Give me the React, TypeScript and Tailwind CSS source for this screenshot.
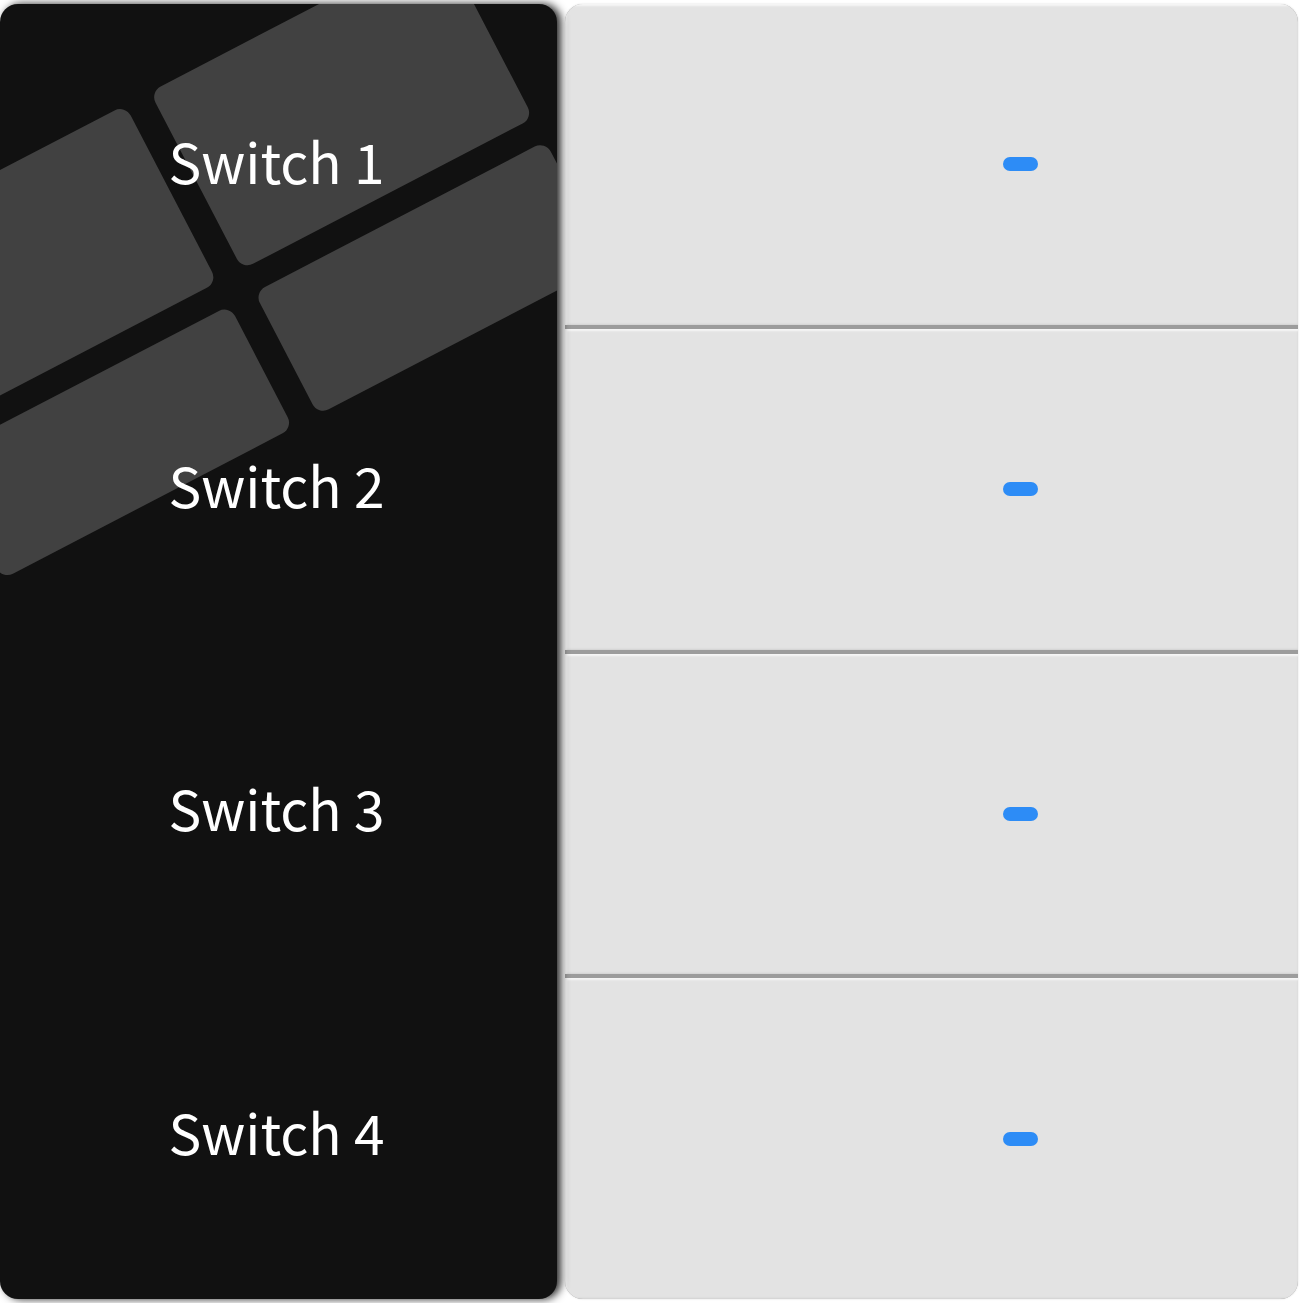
import { Fragment } from 'react';

const SWITCHES = ['Switch 1', 'Switch 2', 'Switch 3', 'Switch 4'];

function PlateArt() {
  return (
    <svg className="pointer-events-none absolute inset-0" width="557" height="1295" viewBox="0 0 557 1295">
      <g transform="translate(150 88) rotate(-27.5)" fill="#414141">
        <rect x="0" y="0" width="328" height="200" rx="12" />
        <rect x="-356" y="0" width="328" height="200" rx="12" />
        <rect x="0" y="226" width="328" height="138" rx="12" />
        <rect x="-356" y="226" width="328" height="138" rx="12" />
      </g>
    </svg>
  );
}

export default function App() {
  return (
    <div className="min-h-screen bg-white">
      <div className="mt-[4px] flex h-[1295px] w-[1298px]">
        <div className="relative w-[557px] shrink-0 overflow-hidden rounded-[18px] bg-[#111111] shadow-[4px_0_8px_rgba(0,0,0,0.85)]">
          <PlateArt />
          <div className="relative flex h-full flex-col">
            {SWITCHES.map((label) => (
              <div key={label} className="flex flex-1 items-center justify-center pr-[4px]">
                <span
                  className="mb-[11px] text-[55px] leading-none text-white"
                  style={{ fontFamily: '"Noto Sans CJK SC", "Noto Sans", sans-serif' }}
                >
                  {label}
                </span>
              </div>
            ))}
          </div>
        </div>

        <div className="ml-[8px] flex flex-1 flex-col overflow-hidden rounded-[18px] bg-[#9c9c9c] shadow-[0_0_2px_rgba(0,0,0,0.15)]">
          {SWITCHES.map((label, i) => (
            <Fragment key={label}>
              {i > 0 ? <div className="h-[4px] shrink-0 bg-[#9c9c9c]" /> : null}
              <div className="flex flex-1 items-center bg-[#e3e3e3] pl-[438px] shadow-[inset_2px_2px_2px_rgba(255,255,255,0.7),inset_0_-1px_2px_rgba(0,0,0,0.08)]">
                <div className="h-[14px] w-[35px] rounded-full bg-[#2d8cf6]" />
              </div>
            </Fragment>
          ))}
        </div>
      </div>
    </div>
  );
}
